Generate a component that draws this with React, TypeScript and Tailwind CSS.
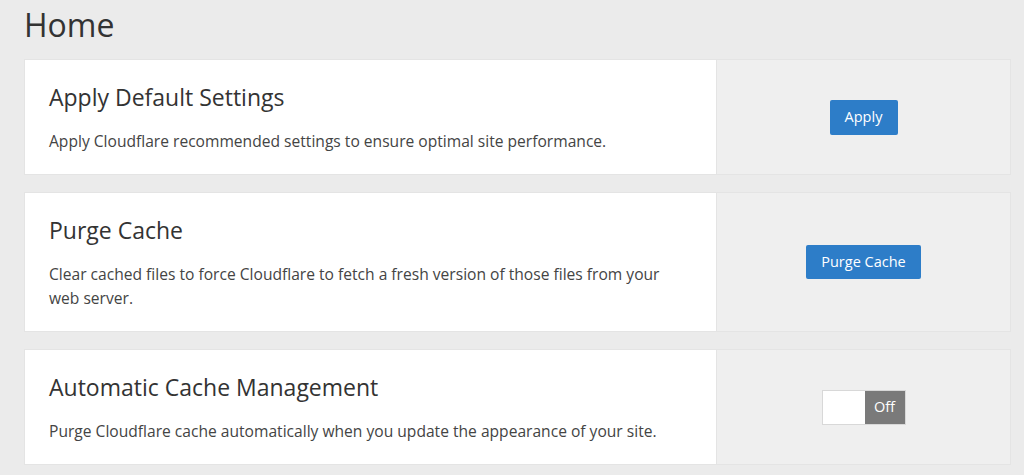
import React from "react";

function Card({
  title,
  desc,
  children,
}: {
  title: string;
  desc: string;
  children: React.ReactNode;
}) {
  return (
    <div className="flex border border-[#e4e4e4] bg-white">
      <div className="w-[691px] shrink-0 bg-white px-6 pb-[21px] pt-[23px]">
        <h2 className="text-[23px] leading-[28px] text-[#333]">{title}</h2>
        <p className="mt-[18px] pr-[20px] text-[15.6px] leading-[24px] text-[#444]">{desc}</p>
      </div>
      <div className="flex flex-1 items-center justify-center border-l border-[#e4e4e4] bg-[#efefef]">
        {children}
      </div>
    </div>
  );
}

export default function App() {
  return (
    <div
      className="min-h-[475px] w-[1024px] bg-[#ebebeb] pl-6 pr-[13px] pt-[5px]"
      style={{ fontFamily: '"Open Sans", sans-serif' }}
    >
      <h1 className="mb-[14px] text-[32px] leading-[40px] text-[#333]">Home</h1>
      <div className="flex flex-col gap-[17px]">
        <Card
          title="Apply Default Settings"
          desc="Apply Cloudflare recommended settings to ensure optimal site performance."
        >
          <button className="h-[35px] w-[68px] rounded-[2px] bg-[#2d7dc8] text-[14.5px] text-white">
            Apply
          </button>
        </Card>
        <Card
          title="Purge Cache"
          desc="Clear cached files to force Cloudflare to fetch a fresh version of those files from your web server."
        >
          <button className="h-[34px] w-[115px] rounded-[2px] bg-[#2d7dc8] text-[14.5px] text-white">
            Purge Cache
          </button>
        </Card>
        <Card
          title="Automatic Cache Management"
          desc="Purge Cloudflare cache automatically when you update the appearance of your site."
        >
          <div className="flex h-[35px] w-[84px] border border-[#d8d8d8]">
            <div className="w-[42px] bg-white" />
            <div className="flex flex-1 items-center justify-center bg-[#7a7a7a] text-[14.5px] text-white">
              Off
            </div>
          </div>
        </Card>
      </div>
    </div>
  );
}
